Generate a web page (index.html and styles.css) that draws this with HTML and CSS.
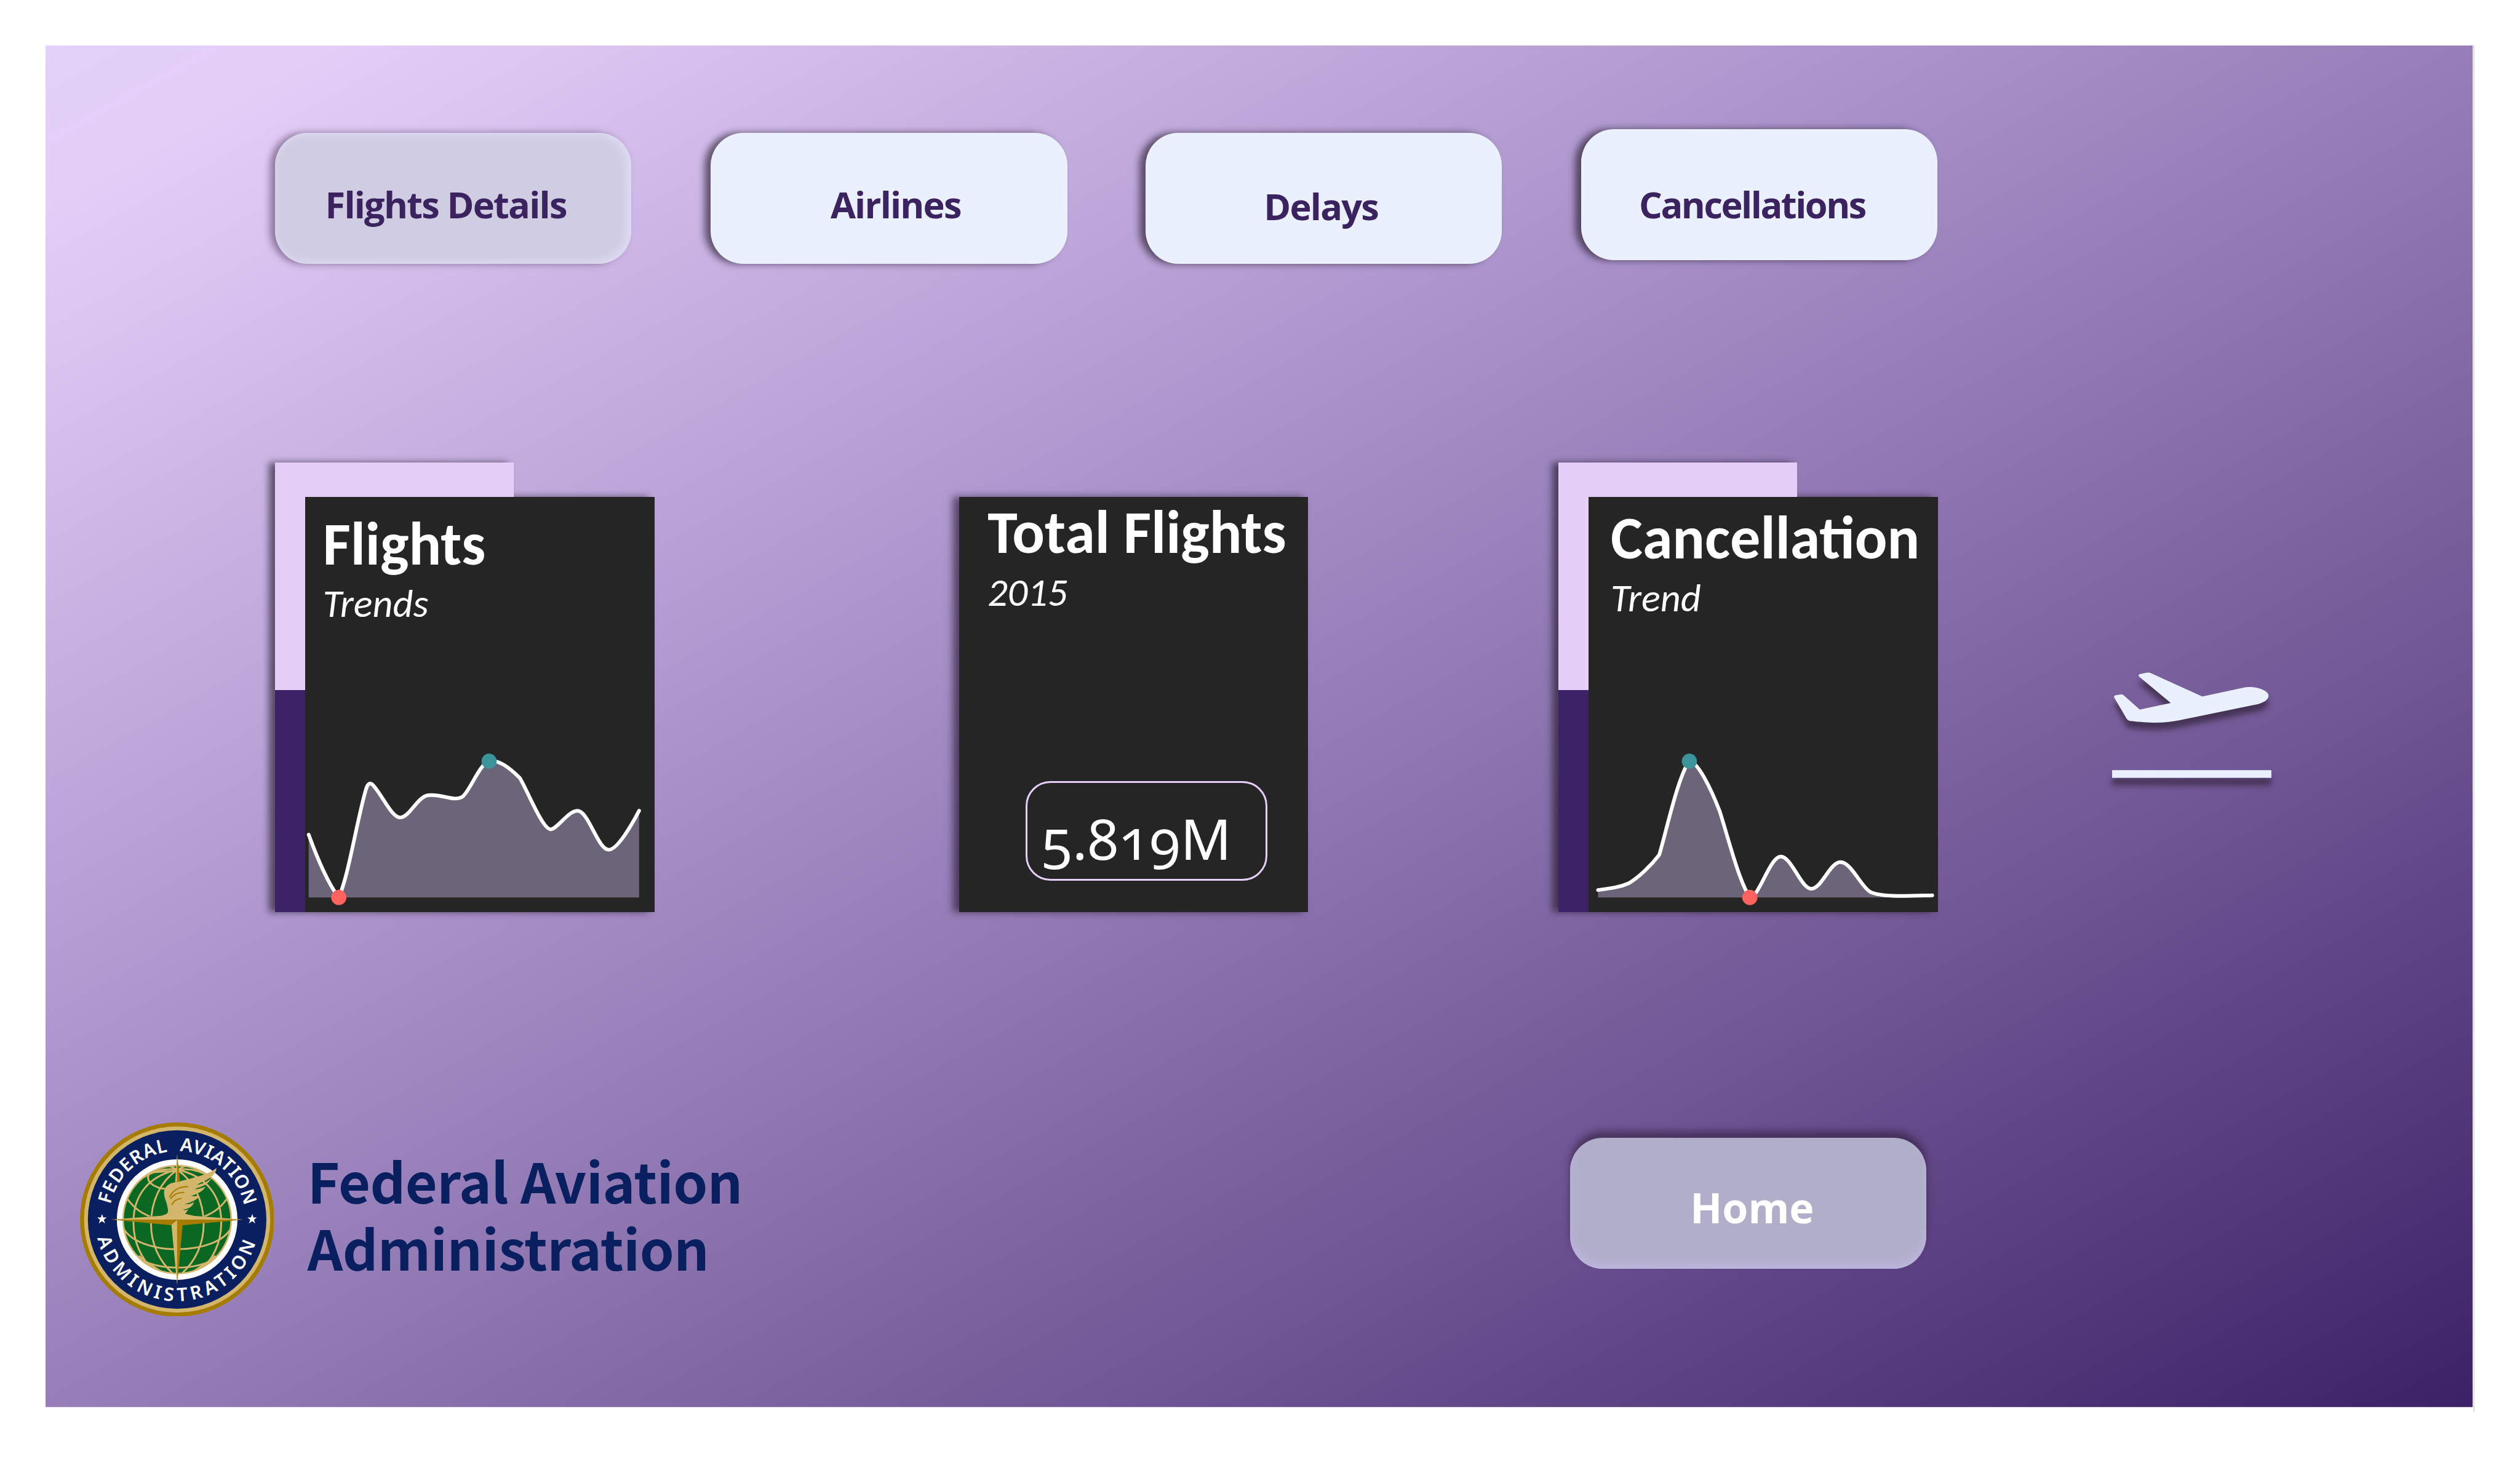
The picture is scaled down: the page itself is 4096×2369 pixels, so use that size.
FILE: index.html
```html
<!DOCTYPE html>
<html lang="en">
<head>
<meta charset="utf-8">
<title>Flights Details</title>
<link rel="stylesheet" href="styles.css">
</head>
<body>
<main class="report">
  <nav class="tabs">
    <a class="tab tab-active">Flights Details</a>
    <a class="tab tab-airlines">Airlines</a>
    <a class="tab tab-delays">Delays</a>
    <a class="tab tab-cancellations">Cancellations</a>
  </nav>

  <section class="cards">
    <article class="trend">
      <div class="trend-light"></div>
      <div class="trend-deep"></div>
      <div class="card card-flights">
        <h2 class="title">Flights</h2>
        <p class="subtitle">Trends</p>
        <svg class="chart" viewBox="186 965 1287 530" preserveAspectRatio="none">
          <path class="area" d="M199 1243C230 1318 268 1396 309 1446C345 1385 380 1180 412 1092Q421 1070 436 1083C470 1115 505 1188 536 1188C570 1188 600 1120 640 1116C690 1110 735 1140 768 1119C795 1098 830 1015 863 1006C900 1000 940 1028 977 1060C1000 1090 1060 1226 1091 1226C1115 1226 1155 1166 1190 1166C1230 1166 1265 1292 1305 1292C1335 1292 1385 1220 1417 1166V1446H199Z"/>
          <path class="line" d="M199 1243C230 1318 268 1396 309 1446C345 1385 380 1180 412 1092Q421 1070 436 1083C470 1115 505 1188 536 1188C570 1188 600 1120 640 1116C690 1110 735 1140 768 1119C795 1098 830 1015 863 1006C900 1000 940 1028 977 1060C1000 1090 1060 1226 1091 1226C1115 1226 1155 1166 1190 1166C1230 1166 1265 1292 1305 1292C1335 1292 1385 1220 1417 1166"/>
          <ellipse class="high" cx="864" cy="1006" rx="28" ry="24.5"/>
          <ellipse class="low" cx="310" cy="1446" rx="28" ry="24.5"/>
        </svg>
      </div>
    </article>

    <article class="card card-total">
      <h2 class="title">Total Flights</h2>
      <p class="subtitle">2015</p>
      <div class="figure">5.819M</div>
    </article>

    <article class="trend trend-right">
      <div class="trend-light"></div>
      <div class="trend-deep"></div>
      <div class="card card-cancel">
        <h2 class="title">Cancellation</h2>
        <p class="subtitle">Trend</p>
        <svg class="chart" viewBox="171 965 1288 530" preserveAspectRatio="none">
          <path class="area" d="M206 1422C260 1416 290 1412 320 1400C355 1382 400 1345 432 1308C460 1225 500 1060 542 1006C575 1006 625 1100 655 1168C690 1265 725 1390 766 1446C800 1446 840 1314 880 1314C920 1314 955 1418 993 1418C1030 1418 1062 1332 1100 1332C1140 1332 1175 1410 1210 1428C1250 1446 1350 1441 1439 1439V1446H206Z"/>
          <path class="line" d="M206 1422C260 1416 290 1412 320 1400C355 1382 400 1345 432 1308C460 1225 500 1060 542 1006C575 1006 625 1100 655 1168C690 1265 725 1390 766 1446C800 1446 840 1314 880 1314C920 1314 955 1418 993 1418C1030 1418 1062 1332 1100 1332C1140 1332 1175 1410 1210 1428C1250 1446 1350 1441 1439 1439"/>
          <ellipse class="high" cx="543" cy="1006" rx="28" ry="24.5"/>
          <ellipse class="low" cx="766" cy="1446" rx="28" ry="24.5"/>
        </svg>
      </div>
    </article>

    <svg class="takeoff" viewBox="116 82 787 522">
      <path d="M249 103Q243 94 254 91L287 84Q298 82 306 86L562 202L770 157C815 149 889 168 889 198C889 222 855 237 820 243L450 319C370 335 310 334 205 323Q194 322 187 311L127 208Q123 200 132 196L156 192Q167 190 173 196L253 267L406 234Z"/>
      <rect x="116" y="566" width="787" height="38"/>
    </svg>
  </section>

  <footer class="foot">
    <svg class="seal" viewBox="64 56 960 960">
      <defs>
        <path id="arc-top" d="M206 536A338 338 0 0 1 882 536"/>
        <path id="arc-bottom" d="M140 536A404 404 0 0 0 948 536"/>
        <clipPath id="globe"><circle cx="544" cy="536" r="266"/></clipPath>
      </defs>
      <circle cx="544" cy="536" r="480" fill="#a67c00"/>
      <circle cx="544" cy="536" r="460" fill="#d3b66b"/>
      <circle cx="544" cy="536" r="441" fill="#091f60"/>
      <circle cx="544" cy="536" r="298" fill="#fff"/>
      <circle cx="544" cy="536" r="271" fill="#d3b66b"/>
      <circle cx="544" cy="536" r="263" fill="#0b6823"/>
      <g class="seal-text">
        <text><textPath href="#arc-top" startOffset="75" textLength="409">FEDERAL</textPath></text>
        <text><textPath href="#arc-top" startOffset="543" textLength="450">AVIATION</textPath></text>
        <text><textPath href="#arc-bottom" startOffset="92" textLength="1060">ADMINISTRATION</textPath></text>
      </g>
      <path id="star" fill="#fff" d="M173 508L179 526L196 526L182 537L188 555L173 544L157 555L163 537L149 526L167 526Z"/>
      <use href="#star" x="742"/>
      <g class="grid" clip-path="url(#globe)">
        <path d="M545 290C465 345 415 440 415 560C415 660 460 745 520 800"/>
        <path d="M545 290C625 345 675 440 675 560C675 660 630 745 570 800"/>
        <path d="M545 290C400 320 328 420 328 550C328 650 370 740 450 810"/>
        <path d="M545 290C690 320 762 420 762 550C762 650 720 740 638 810"/>
        <path d="M545 290C480 280 420 300 375 330M545 290C610 280 670 300 715 330"/>
        <path d="M545 290L505 270M545 290L585 270M545 298C490 296 450 300 410 305"/>
        <path d="M408 305C385 340 415 380 500 386"/>
        <path d="M298 434C325 470 355 500 408 520M790 434C763 470 733 500 680 520"/>
        <path d="M274 570C340 720 750 720 814 570"/>
        <path d="M355 725C440 790 650 790 733 725"/>
        <path d="M355 715C400 760 440 770 470 800M733 715C688 760 648 770 618 800"/>
      </g>
      <path fill="#a67c00" d="M217 536L544 536L517 564ZM544 536H872L571 564L544 860Z"/>
      <path fill="#d3b66b" d="M217 536L466 517C490 512 500 505 499 492C496 450 475 425 480 395C485 365 515 352 550 349C620 330 690 320 738 282C738 300 725 318 705 330C680 347 655 355 642 364C665 360 690 352 714 330C700 360 672 372 640 381L624 389C650 386 670 380 684 373C675 395 650 405 612 421C630 421 645 419 654 417C648 435 625 445 596 456L580 460C600 462 615 458 628 449C620 475 600 482 572 488C585 490 592 488 600 485L584 508L630 518L872 536Z"/>
      <path fill="#d3b66b" d="M544 538V860L516 562Z"/>
      <path fill="#d3b66b" d="M544 210V350H534Z"/>
      <path fill="#a67c00" d="M544 210L558 346L544 350Z"/>
      <path class="feather" d="M507 424C525 388 560 374 596 373M513 432C530 408 550 402 576 402M518 462C528 440 545 434 563 432"/>
    </svg>
    <p class="agency">Federal Aviation<br>Administration</p>
    <a class="home">Home</a>
  </footer>
</main>
</body>
</html>
```
FILE: styles.css
```css
*{box-sizing:border-box}
/* 1rem is a hundredth of a 4150-unit wide artboard */
html{font-size:calc(100vw / 41.5)}
body{margin:0;background:#fff;overflow:hidden}
h2,p{margin:0}
.report{
  width:40rem;height:22.5rem;margin:.75rem;
  border-right:.03rem solid #dcdcdc;
  background:linear-gradient(to bottom right,#e2d1f9 0%,#e4cef8 6%,#a891c9 40%,#775e9b 68%,#3d2168 100%) 0 0/39.97rem 22.43rem no-repeat;
}
.tabs{display:flex;padding:1.44rem 0 0 3.777rem}
.tab,.home{
  display:flex;align-items:center;justify-content:center;
  width:5.87rem;height:2.16rem;border-radius:.54rem;
  font:700 .602rem/1 "Open Sans","Noto Sans",sans-serif;color:#3a235f;
}
.tab{padding-top:.19rem;letter-spacing:-.018rem;background:#ebf0fe;box-shadow:-.1rem 0 .12rem rgba(25,15,30,.6)}
.tab-active{padding-right:.24rem;background:#d0cde2;box-shadow:-.08rem 0 .12rem rgba(60,40,70,.5),inset -.05rem 0 .14rem .03rem #e0dbf6}
.tab-airlines{margin-left:1.308rem;padding-left:.22rem}
.tab-delays{margin-left:1.29rem;padding-right:.09rem;padding-top:.25rem}
.tab-cancellations{margin:-.06rem 0 0 1.305rem;padding-right:.24rem;padding-top:.31rem;letter-spacing:-.025rem}

.cards{display:flex;align-items:flex-end;margin-top:3.27rem;padding-left:3.78rem;height:7.41rem}
.trend{
  display:grid;grid-template-columns:.5rem 3.435rem 2.315rem;grid-template-rows:.57rem 3.18rem 3.66rem;
  filter:drop-shadow(-.1rem 0 .06rem rgba(25,15,30,.6));
}
.trend-light{grid-area:1/1/3/3;background:#e5cff9}
.trend-deep{grid-area:3/1/4/2;background:#3c2368}
.card{display:flex;flex-direction:column;background:#252525;color:#fff}
.trend .card{grid-area:2/2/4/4}
.card-total{width:5.745rem;height:6.84rem;margin-left:5.02rem;box-shadow:-.1rem 0 .12rem rgba(25,15,30,.6)}
.trend-right{margin-left:4.12rem}
.title{font:700 .995rem/1.1rem Carlito,Lato,sans-serif;white-space:nowrap}
.subtitle{font:italic 400 .65rem/.88rem Carlito,Lato,sans-serif}
.card-flights{padding:.215rem 0 0 .286rem}
.card-total{padding:.03rem 0 0 .464rem}
.card-cancel{padding:.12rem 0 0 .36rem}
.chart{display:block;height:2.704rem;margin-top:auto;overflow:visible}
.card-flights .chart{width:5.75rem;margin-left:-.286rem}
.card-cancel .chart{width:5.75rem;margin-left:-.36rem}
.area{fill:#6c6478}
.line{fill:none;stroke:#fff;stroke-width:.06rem;stroke-linecap:round;stroke-linejoin:round;vector-effect:non-scaling-stroke}
.high{fill:#3b9499}
.low{fill:#fd625e}
.figure{
  width:3.98rem;height:1.64rem;margin:auto 0 .52rem .626rem;padding-left:.23rem;
  border:.04rem solid #e5cff9;border-radius:.41rem;
  font:400 .925rem/1.83rem "Noto Sans","Open Sans",sans-serif;font-variant-numeric:oldstyle-nums;letter-spacing:.004rem;
}
.takeoff{
  align-self:flex-start;width:2.623rem;height:1.74rem;margin:3.45rem 0 0 2.873rem;fill:#ebf0fe;overflow:visible;
  filter:drop-shadow(0 .13rem .05rem rgba(45,30,50,.65));
}

.foot{display:flex;align-items:flex-start;margin-top:3.457rem;padding-left:.563rem}
.seal{width:3.2rem;height:3.2rem}
.seal-text{font:600 92px "Noto Sans","Open Sans",sans-serif;fill:#fff}
.grid{fill:none;stroke:#d3b66b;stroke-width:9}
.feather{fill:none;stroke:#a67c00;stroke-width:6;stroke-linecap:round}
.agency{width:15rem;margin:.4rem 0 0 .55rem;font:700 .908rem/1.1rem "Noto Sans CJK JP",sans-serif;letter-spacing:-.005rem;color:#091f60}
.home{
  margin:.253rem 0 0 5.792rem;padding:.14rem 0 0 .13rem;
  font-size:.69rem;color:#fff;background:#b1aeca;
  box-shadow:0 -.11rem .12rem rgba(45,25,55,.55),inset 0 -.1rem .14rem #bcb5dc;
}
```
